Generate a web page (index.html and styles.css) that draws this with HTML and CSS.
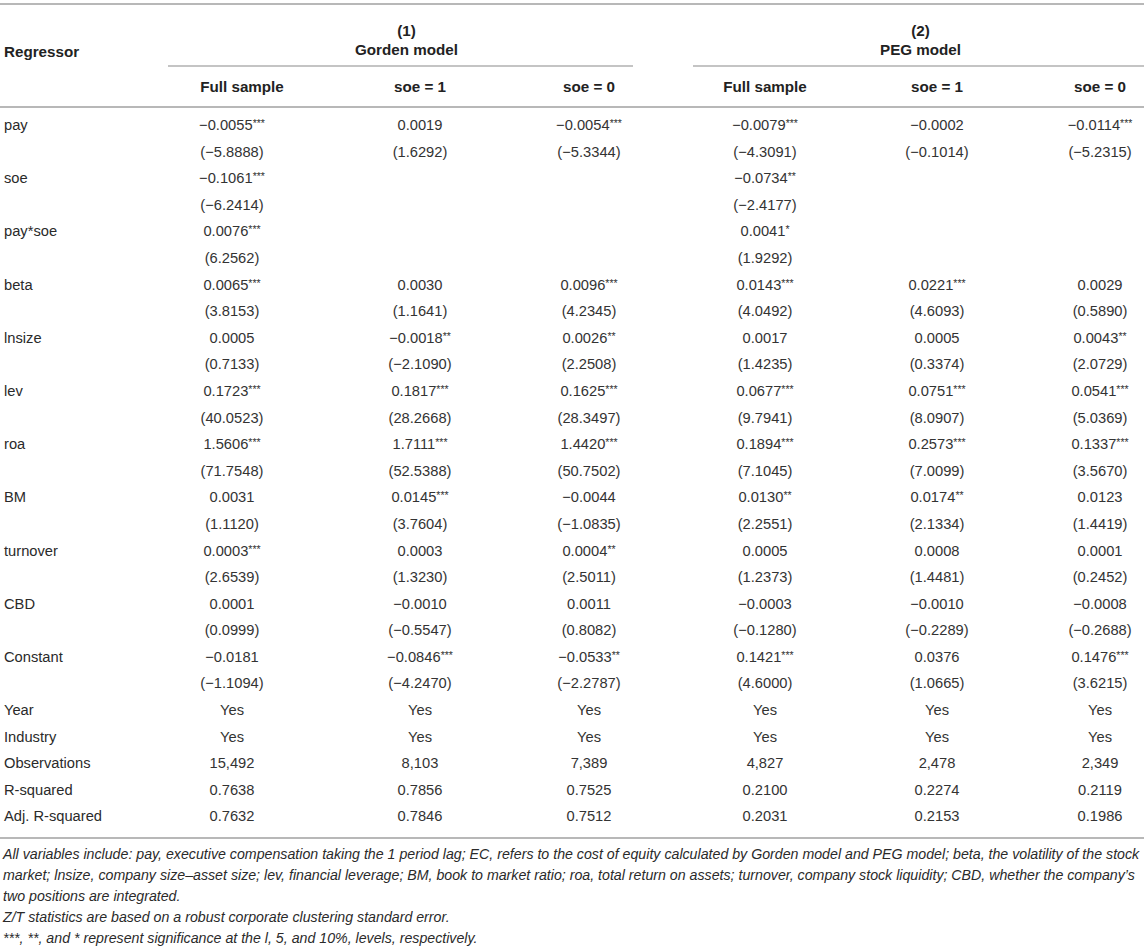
FILE: index.html
```html
<!DOCTYPE html>
<html lang="en">
<head>
<meta charset="utf-8">
<title>Regression results</title>
<link rel="stylesheet" href="styles.css">
</head>
<body>
<div class="wrap">
<table class="reg">
<colgroup>
<col class="c0"><col class="c1"><col class="c2"><col class="c3"><col class="c4"><col class="c5"><col class="c6">
</colgroup>
<thead>
<tr class="grp">
<th class="lab">Regressor</th>
<th colspan="3" class="g"><div class="gbox g1">(1)<br>Gorden model</div></th>
<th colspan="3" class="g"><div class="gbox g2">(2)<br>PEG model</div></th>
</tr>
<tr class="sub">
<th class="lab"></th>
<th class="h1">Full sample</th><th>soe = 1</th><th>soe = 0</th>
<th>Full sample</th><th>soe = 1</th><th class="last">soe = 0</th>
</tr>
</thead>
<tbody>
<tr class="first"><td class="lab">pay</td><td>−0.0055<span class="s">***</span></td><td>0.0019</td><td>−0.0054<span class="s">***</span></td><td>−0.0079<span class="s">***</span></td><td>−0.0002</td><td class="last">−0.0114<span class="s">***</span></td></tr>
<tr><td class="lab"></td><td>(−5.8888)</td><td>(1.6292)</td><td>(−5.3344)</td><td>(−4.3091)</td><td>(−0.1014)</td><td class="last">(−5.2315)</td></tr>
<tr><td class="lab">soe</td><td>−0.1061<span class="s">***</span></td><td></td><td></td><td>−0.0734<span class="s">**</span></td><td></td><td class="last"></td></tr>
<tr><td class="lab"></td><td>(−6.2414)</td><td></td><td></td><td>(−2.4177)</td><td></td><td class="last"></td></tr>
<tr><td class="lab">pay*soe</td><td>0.0076<span class="s">***</span></td><td></td><td></td><td>0.0041<span class="s">*</span></td><td></td><td class="last"></td></tr>
<tr><td class="lab"></td><td>(6.2562)</td><td></td><td></td><td>(1.9292)</td><td></td><td class="last"></td></tr>
<tr><td class="lab">beta</td><td>0.0065<span class="s">***</span></td><td>0.0030</td><td>0.0096<span class="s">***</span></td><td>0.0143<span class="s">***</span></td><td>0.0221<span class="s">***</span></td><td class="last">0.0029</td></tr>
<tr><td class="lab"></td><td>(3.8153)</td><td>(1.1641)</td><td>(4.2345)</td><td>(4.0492)</td><td>(4.6093)</td><td class="last">(0.5890)</td></tr>
<tr><td class="lab">lnsize</td><td>0.0005</td><td>−0.0018<span class="s">**</span></td><td>0.0026<span class="s">**</span></td><td>0.0017</td><td>0.0005</td><td class="last">0.0043<span class="s">**</span></td></tr>
<tr><td class="lab"></td><td>(0.7133)</td><td>(−2.1090)</td><td>(2.2508)</td><td>(1.4235)</td><td>(0.3374)</td><td class="last">(2.0729)</td></tr>
<tr><td class="lab">lev</td><td>0.1723<span class="s">***</span></td><td>0.1817<span class="s">***</span></td><td>0.1625<span class="s">***</span></td><td>0.0677<span class="s">***</span></td><td>0.0751<span class="s">***</span></td><td class="last">0.0541<span class="s">***</span></td></tr>
<tr><td class="lab"></td><td>(40.0523)</td><td>(28.2668)</td><td>(28.3497)</td><td>(9.7941)</td><td>(8.0907)</td><td class="last">(5.0369)</td></tr>
<tr><td class="lab">roa</td><td>1.5606<span class="s">***</span></td><td>1.7111<span class="s">***</span></td><td>1.4420<span class="s">***</span></td><td>0.1894<span class="s">***</span></td><td>0.2573<span class="s">***</span></td><td class="last">0.1337<span class="s">***</span></td></tr>
<tr><td class="lab"></td><td>(71.7548)</td><td>(52.5388)</td><td>(50.7502)</td><td>(7.1045)</td><td>(7.0099)</td><td class="last">(3.5670)</td></tr>
<tr><td class="lab">BM</td><td>0.0031</td><td>0.0145<span class="s">***</span></td><td>−0.0044</td><td>0.0130<span class="s">**</span></td><td>0.0174<span class="s">**</span></td><td class="last">0.0123</td></tr>
<tr><td class="lab"></td><td>(1.1120)</td><td>(3.7604)</td><td>(−1.0835)</td><td>(2.2551)</td><td>(2.1334)</td><td class="last">(1.4419)</td></tr>
<tr><td class="lab">turnover</td><td>0.0003<span class="s">***</span></td><td>0.0003</td><td>0.0004<span class="s">**</span></td><td>0.0005</td><td>0.0008</td><td class="last">0.0001</td></tr>
<tr><td class="lab"></td><td>(2.6539)</td><td>(1.3230)</td><td>(2.5011)</td><td>(1.2373)</td><td>(1.4481)</td><td class="last">(0.2452)</td></tr>
<tr><td class="lab">CBD</td><td>0.0001</td><td>−0.0010</td><td>0.0011</td><td>−0.0003</td><td>−0.0010</td><td class="last">−0.0008</td></tr>
<tr><td class="lab"></td><td>(0.0999)</td><td>(−0.5547)</td><td>(0.8082)</td><td>(−0.1280)</td><td>(−0.2289)</td><td class="last">(−0.2688)</td></tr>
<tr><td class="lab">Constant</td><td>−0.0181</td><td>−0.0846<span class="s">***</span></td><td>−0.0533<span class="s">**</span></td><td>0.1421<span class="s">***</span></td><td>0.0376</td><td class="last">0.1476<span class="s">***</span></td></tr>
<tr><td class="lab"></td><td>(−1.1094)</td><td>(−4.2470)</td><td>(−2.2787)</td><td>(4.6000)</td><td>(1.0665)</td><td class="last">(3.6215)</td></tr>
<tr><td class="lab">Year</td><td>Yes</td><td>Yes</td><td>Yes</td><td>Yes</td><td>Yes</td><td class="last">Yes</td></tr>
<tr><td class="lab">Industry</td><td>Yes</td><td>Yes</td><td>Yes</td><td>Yes</td><td>Yes</td><td class="last">Yes</td></tr>
<tr><td class="lab">Observations</td><td>15,492</td><td>8,103</td><td>7,389</td><td>4,827</td><td>2,478</td><td class="last">2,349</td></tr>
<tr><td class="lab">R-squared</td><td>0.7638</td><td>0.7856</td><td>0.7525</td><td>0.2100</td><td>0.2274</td><td class="last">0.2119</td></tr>
<tr class="end"><td class="lab">Adj. R-squared</td><td>0.7632</td><td>0.7846</td><td>0.7512</td><td>0.2031</td><td>0.2153</td><td class="last">0.1986</td></tr>
</tbody>
</table>
<div class="notes">
<p>All variables include: pay, executive compensation taking the 1 period lag; EC, refers to the cost of equity calculated by Gorden model and PEG model; beta, the volatility of the stock<br>market; lnsize, company size–asset size; lev, financial leverage; BM, book to market ratio; roa, total return on assets; turnover, company stock liquidity; CBD, whether the company’s<br>two positions are integrated.</p>
<p>Z/T statistics are based on a robust corporate clustering standard error.</p>
<p>***, **, and * represent significance at the l, 5, and 10%, levels, respectively.</p>
</div>
</div>
</body>
</html>
```

FILE: styles.css
```css
html, body {
  margin: 0;
  padding: 0;
  background: #ffffff;
}

body {
  font-family: "Liberation Sans", Arial, Helvetica, sans-serif;
  color: #2a2a2a;
  font-size: 14.7px;
}

.wrap {
  width: 1144px;
  padding-top: 3px;
}

.reg {
  width: 1144px;
  table-layout: fixed;
  border-collapse: collapse;
  border-top: 2px solid #b8b8b8;
}

.c0 { width: 146px; }
.c1 { width: 172px; }
.c2 { width: 204px; }
.c3 { width: 134px; }
.c4 { width: 218px; }
.c5 { width: 126px; }
.c6 { width: 144px; }

.reg th,
.reg td {
  padding: 0;
  text-align: center;
  font-weight: normal;
  white-space: nowrap;
}

.reg th {
  font-weight: bold;
  font-size: 15.2px;
  color: #222222;
  line-height: 19px;
}

.reg .lab {
  text-align: left;
  padding-left: 4px;
}

.grp th {
  padding-top: 16px;
  vertical-align: bottom;
}

.grp th.lab {
  padding-bottom: 6px;
}

.gbox {
  padding-bottom: 6px;
  border-bottom: 2px solid #c4c4c4;
}

.g1 {
  margin: 0 23px 0 22px;
  padding-left: 12px;
}

.g2 {
  margin-left: 37px;
  padding-left: 4px;
}

.sub th {
  padding-top: 10px;
  padding-bottom: 10px;
  border-bottom: 2px solid #b8b8b8;
}

.sub th.h1 {
  padding-left: 20px;
}

.reg td {
  line-height: 26.6px;
  color: #333333;
}

.reg td.lab {
  color: #2a2a2a;
}

.reg .last {
  padding-left: 56px;
}

.first td {
  padding-top: 4px;
}

.end td {
  padding-bottom: 7px;
}

.reg tbody {
  border-bottom: 2px solid #b8b8b8;
}

.s {
  font-size: 10.5px;
  vertical-align: 3px;
  line-height: 0;
}

.notes {
  padding-top: 5px;
  padding-left: 3px;
  font-size: 14.2px;
  font-style: italic;
  color: #2a2a2a;
  line-height: 21px;
  white-space: nowrap;
}

.notes p {
  margin: 0;
}
```
